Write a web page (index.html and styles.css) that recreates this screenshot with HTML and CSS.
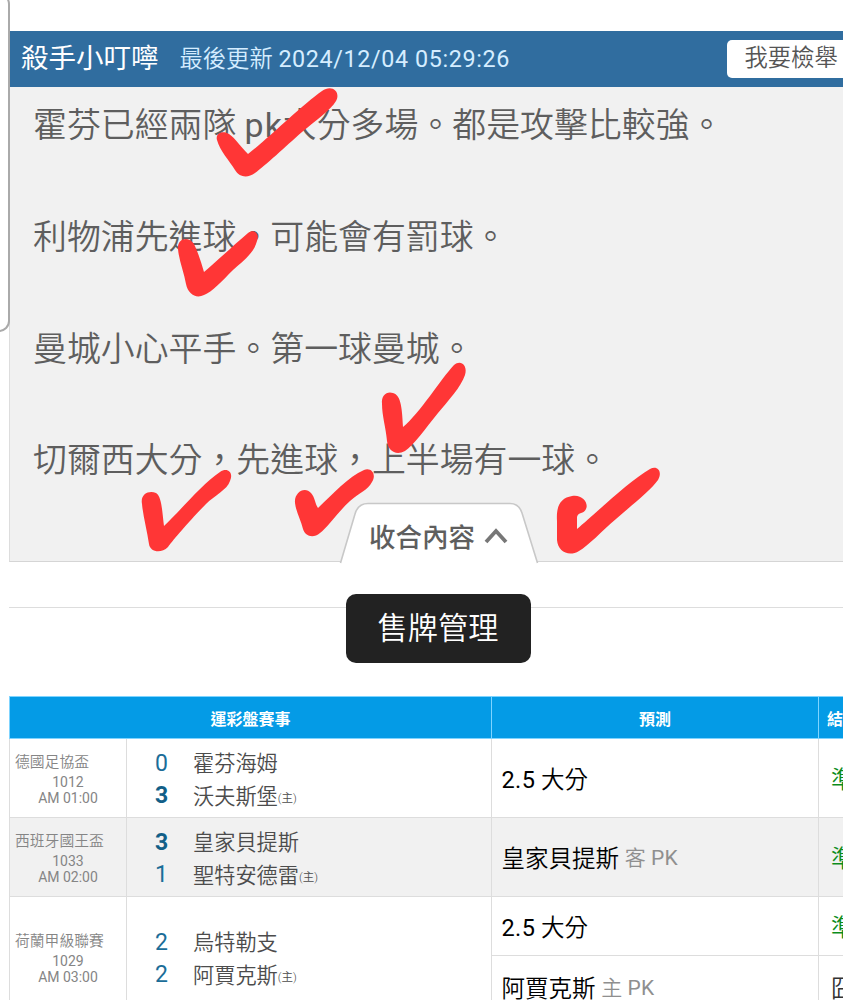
FILE: index.html
```html
<!DOCTYPE html>
<html lang="zh-Hant">
<head>
  <meta charset="UTF-8">
  <meta name="viewport" content="width=device-width, initial-scale=1.0">
  <title>殺手小叮嚀</title>
  <link rel="stylesheet" href="styles.css">
</head>
<body>
  <div class="side-card"></div>

  <main class="page">
    <section class="notice">
      <header class="notice-head">
        <h1>殺手小叮嚀</h1>
        <span class="updated">最後更新 <span class="time">2024/12/04 05:29:26</span></span>
        <button class="report">我要檢舉</button>
      </header>
      <div class="notice-body">
        <p>霍芬已經兩隊 <span class="latin">pk</span>大分多場。都是攻擊比較強。</p>
        <p>利物浦先進球。可能會有罰球。</p>
        <p>曼城小心平手。第一球曼城。</p>
        <p>切爾西大分，先進球，上半場有一球。</p>
        <div class="toggle">
          <svg class="toggle-bg" viewBox="0 0 200 62">
            <path d="M1.500 61 L16 12 Q19 1.500 29 1.500 H171 Q180 1.500 183 11 L198.500 61" fill="#fff" stroke="#c8c8c8" stroke-width="1.600"/>
          </svg>
          <span>收合內容</span>
          <svg class="chevron" viewBox="0 0 24 18"><path d="M2 15 L12 4 L22 15" fill="none" stroke="#777" stroke-width="3.800"/></svg>
        </div>
      </div>
    </section>

    <div class="manage">
      <button>售牌管理</button>
    </div>

    <table class="games">
      <colgroup>
        <col class="c-info"><col class="c-teams"><col class="c-pick"><col class="c-result">
      </colgroup>
      <tr class="head">
        <th colspan="2">運彩盤賽事</th>
        <th>預測</th>
        <th>結果</th>
      </tr>
      <tr class="game">
        <td class="info"><b>德國足協盃</b><span>1012</span><span>AM 01:00</span></td>
        <td class="teams">
          <div><i>0</i>霍芬海姆</div>
          <div><i class="win">3</i>沃夫斯堡<small>(主)</small></div>
        </td>
        <td class="pick"><span class="latin">2.5</span> 大分</td>
        <td class="result hit">準</td>
      </tr>
      <tr class="game alt">
        <td class="info"><b>西班牙國王盃</b><span>1033</span><span>AM 02:00</span></td>
        <td class="teams">
          <div><i class="win">3</i>皇家貝提斯</div>
          <div><i>1</i>聖特安德雷<small>(主)</small></div>
        </td>
        <td class="pick">皇家貝提斯 <em>客 <span class="latin">PK</span></em></td>
        <td class="result hit">準</td>
      </tr>
      <tr class="half">
        <td class="info" rowspan="2"><b>荷蘭甲級聯賽</b><span>1029</span><span>AM 03:00</span></td>
        <td class="teams" rowspan="2">
          <div><i>2</i>烏特勒支</div>
          <div><i>2</i>阿賈克斯<small>(主)</small></div>
        </td>
        <td class="pick"><span class="latin">2.5</span> 大分</td>
        <td class="result hit">準</td>
      </tr>
      <tr class="half last">
        <td class="pick">阿賈克斯 <em>主 <span class="latin">PK</span></em></td>
        <td class="result">囧</td>
      </tr>
    </table>
  </main>

  <!-- red pen marks over the article -->
  <svg class="marks" viewBox="0 0 843 1000">
    <path d="M217 140 C215 133 223 130 229 134 C235 138 241 147 248 154 C271 136 302 105 322 91 C332 84 341 92 336 101 C331 110 315 121 302 132 C285 147 266 165 255 173 C248 178 240 178 235 170 C229 160 220 151 217 140Z"/>
    <path d="M178 249 C177 239 188 235 194 244 C198 252 201 262 204 272 C217 261 235 244 248 233 C254 228 260 234 257 241 C254 253 243 261 233 270 C222 281 212 292 204 295 C196 299 188 294 186 284 C184 272 179 261 178 249Z"/>
    <path d="M382 404 C381 395 387 391 393 393 C400 395 402 404 403 427 C420 413 440 380 454 365 C461 359 468 366 465 375 C461 387 448 401 438 413 C425 429 414 445 405 451 C396 456 388 451 387 441 C386 428 382 416 382 404Z"/>
    <path d="M142 504 C140 494 149 490 156 493 C162 497 162 511 164 526 C180 511 202 484 220 472 C227 467 234 472 230 481 C227 490 215 495 206 504 C191 519 174 539 168 547 C161 554 150 552 149 544 C147 530 143 516 142 504Z"/>
    <path d="M295 503 C294 492 305 486 311 493 C315 497 315 504 318 508 C334 493 348 477 364 470 C371 467 377 474 372 482 C368 490 359 493 350 501 C338 512 327 528 320 533 C313 539 305 536 303 529 C301 520 296 512 295 503Z"/>
    <path d="M557 521 C556 505 561 498 572 496 C582 494 589 503 586 509 C584 514 578 512 577 517 L577 529 C595 514 629 481 650 469 C657 465 663 471 658 480 C651 490 632 505 616 519 C602 531 588 546 579 551 C569 557 558 552 557 540Z"/>
  </svg>
</body>
</html>
```
FILE: styles.css
```css
* {
  box-sizing: border-box;
}
body {
  margin: 0;
  height: 1000px;
  position: relative;
  overflow: hidden;
  background: #fff;
  font-family: Roboto, "Noto Sans CJK TC", sans-serif;
  font-weight: 350;
  color: #5e5e5e;
}
button {
  font-family: inherit;
  font-weight: inherit;
  border: none;
}
.latin,
.time {
  font-weight: 400;
}
.page {
  width: 867px;
  padding: 31px 0 0 9px;
}
/* edge of the card on the left, over the page */
.side-card {
  position: absolute;
  left: -20px;
  top: -7px;
  width: 30px;
  height: 339px;
  border: 2px solid #aaa;
  border-radius: 11px;
  background: #fff;
}

.notice {
  height: 531px;
  border-left: 1px solid #ddd;
  border-bottom: 1px solid #d5d5d5;
  background: #f1f1f1;
}
.notice-head {
  display: flex;
  align-items: center;
  height: 56px;
  margin-left: -1px;
  padding-left: 12px;
  background: #306d9f;
  color: #fff;
}
.notice-head h1 {
  margin: 0;
  font-size: 27.5px;
  font-weight: 400;
  line-height: 54px;
}
.updated {
  margin-left: 21px;
  padding-bottom: 5px;
  font-size: 23.3px;
  color: #d5edff;
}
.time {
  letter-spacing: 0.63px;
}
.report {
  margin-left: auto;
  width: 140.5px;
  height: 38px;
  padding: 0 0 2px 18px;
  border-radius: 5px;
  background: #fff;
  color: #555;
  font-size: 23.3px;
  line-height: 36px;
  text-align: left;
}
.notice-body {
  position: relative;
  height: 475px;
  padding: 11px 23px 0;
}
.notice-body p {
  margin: 0 0 55.8px;
  font-size: 33.9px;
  line-height: 56px;
  white-space: nowrap;
}
.notice-body .latin {
  letter-spacing: 1px;
}
.toggle {
  position: absolute;
  left: 50%;
  bottom: -2px;
  display: flex;
  align-items: center;
  justify-content: center;
  gap: 9px;
  width: 200px;
  height: 62px;
  margin-left: -100px;
  padding-top: 4px;
  font-size: 26.5px;
  font-weight: 500;
}
.toggle-bg {
  position: absolute;
  left: 0;
  top: 0;
  width: 200px;
  height: 62px;
}
.toggle span,
.chevron {
  position: relative;
}
.chevron {
  width: 24px;
  height: 18px;
  margin-top: 2px;
}

.manage {
  display: flex;
  justify-content: center;
  margin-top: 32px;
  background: linear-gradient(#ddd, #ddd) 0 13px / 100% 1px no-repeat;
}
.manage button {
  width: 185px;
  height: 69px;
  padding: 0;
  border-radius: 10px;
  background: #222;
  color: #fff;
  font-size: 30.2px;
  line-height: 66px;
}

.games {
  width: 858px;
  margin-top: 33px;
  border-collapse: collapse;
  table-layout: fixed;
}
.c-info { width: 117px; }
.c-teams { width: 365px; }
.c-pick { width: 327px; }
.c-result { width: 49px; }
.games th,
.games td {
  padding: 0;
  border: 1px solid #ddd;
}
.head {
  height: 42px;
}
.head th {
  background: #049be6;
  border-color: #7fd4ff;
  color: #fff;
  font-size: 16px;
  font-weight: 700;
}
.game {
  height: 79px;
}
.half {
  height: 59px;
}
.last {
  height: 62px;
}
.alt {
  background: #f1f1f1;
}
.info {
  color: #858585;
  font-size: 14px;
  font-weight: 400;
  line-height: 16px;
  text-align: center;
}
.info b,
.info span {
  display: block;
}
.info b {
  padding-left: 5px;
  font-size: 14.8px;
  font-weight: 350;
  line-height: 23px;
  text-align: left;
}
.teams div {
  display: flex;
  align-items: center;
  height: 32.5px;
  padding-left: 28px;
  font-size: 21.2px;
  color: #4c4c4c;
}
.teams i {
  width: 38px;
  padding-top: 3px;
  font-size: 23px;
  font-style: normal;
  font-weight: 400;
  color: #1b6d98;
}
.teams .win {
  font-weight: 700;
  color: #125f88;
}
.teams small {
  padding-top: 5px;
  font-size: 11.5px;
}
.games .pick {
  padding: 0 0 0 9.5px;
  font-size: 23.5px;
  color: #000;
}
.pick .latin {
  letter-spacing: 0.4px;
}
.pick em {
  position: relative;
  top: -2px;
  font-size: 21px;
  font-style: normal;
  color: #8f8f8f;
}
.games .result {
  padding-left: 12px;
  font-size: 23.5px;
  white-space: nowrap;
  color: #333;
}
.games .hit {
  color: #0c8c1c;
}

.marks {
  position: absolute;
  left: 0;
  top: 0;
  width: 843px;
  height: 1000px;
  fill: #ff3636;
}
```
